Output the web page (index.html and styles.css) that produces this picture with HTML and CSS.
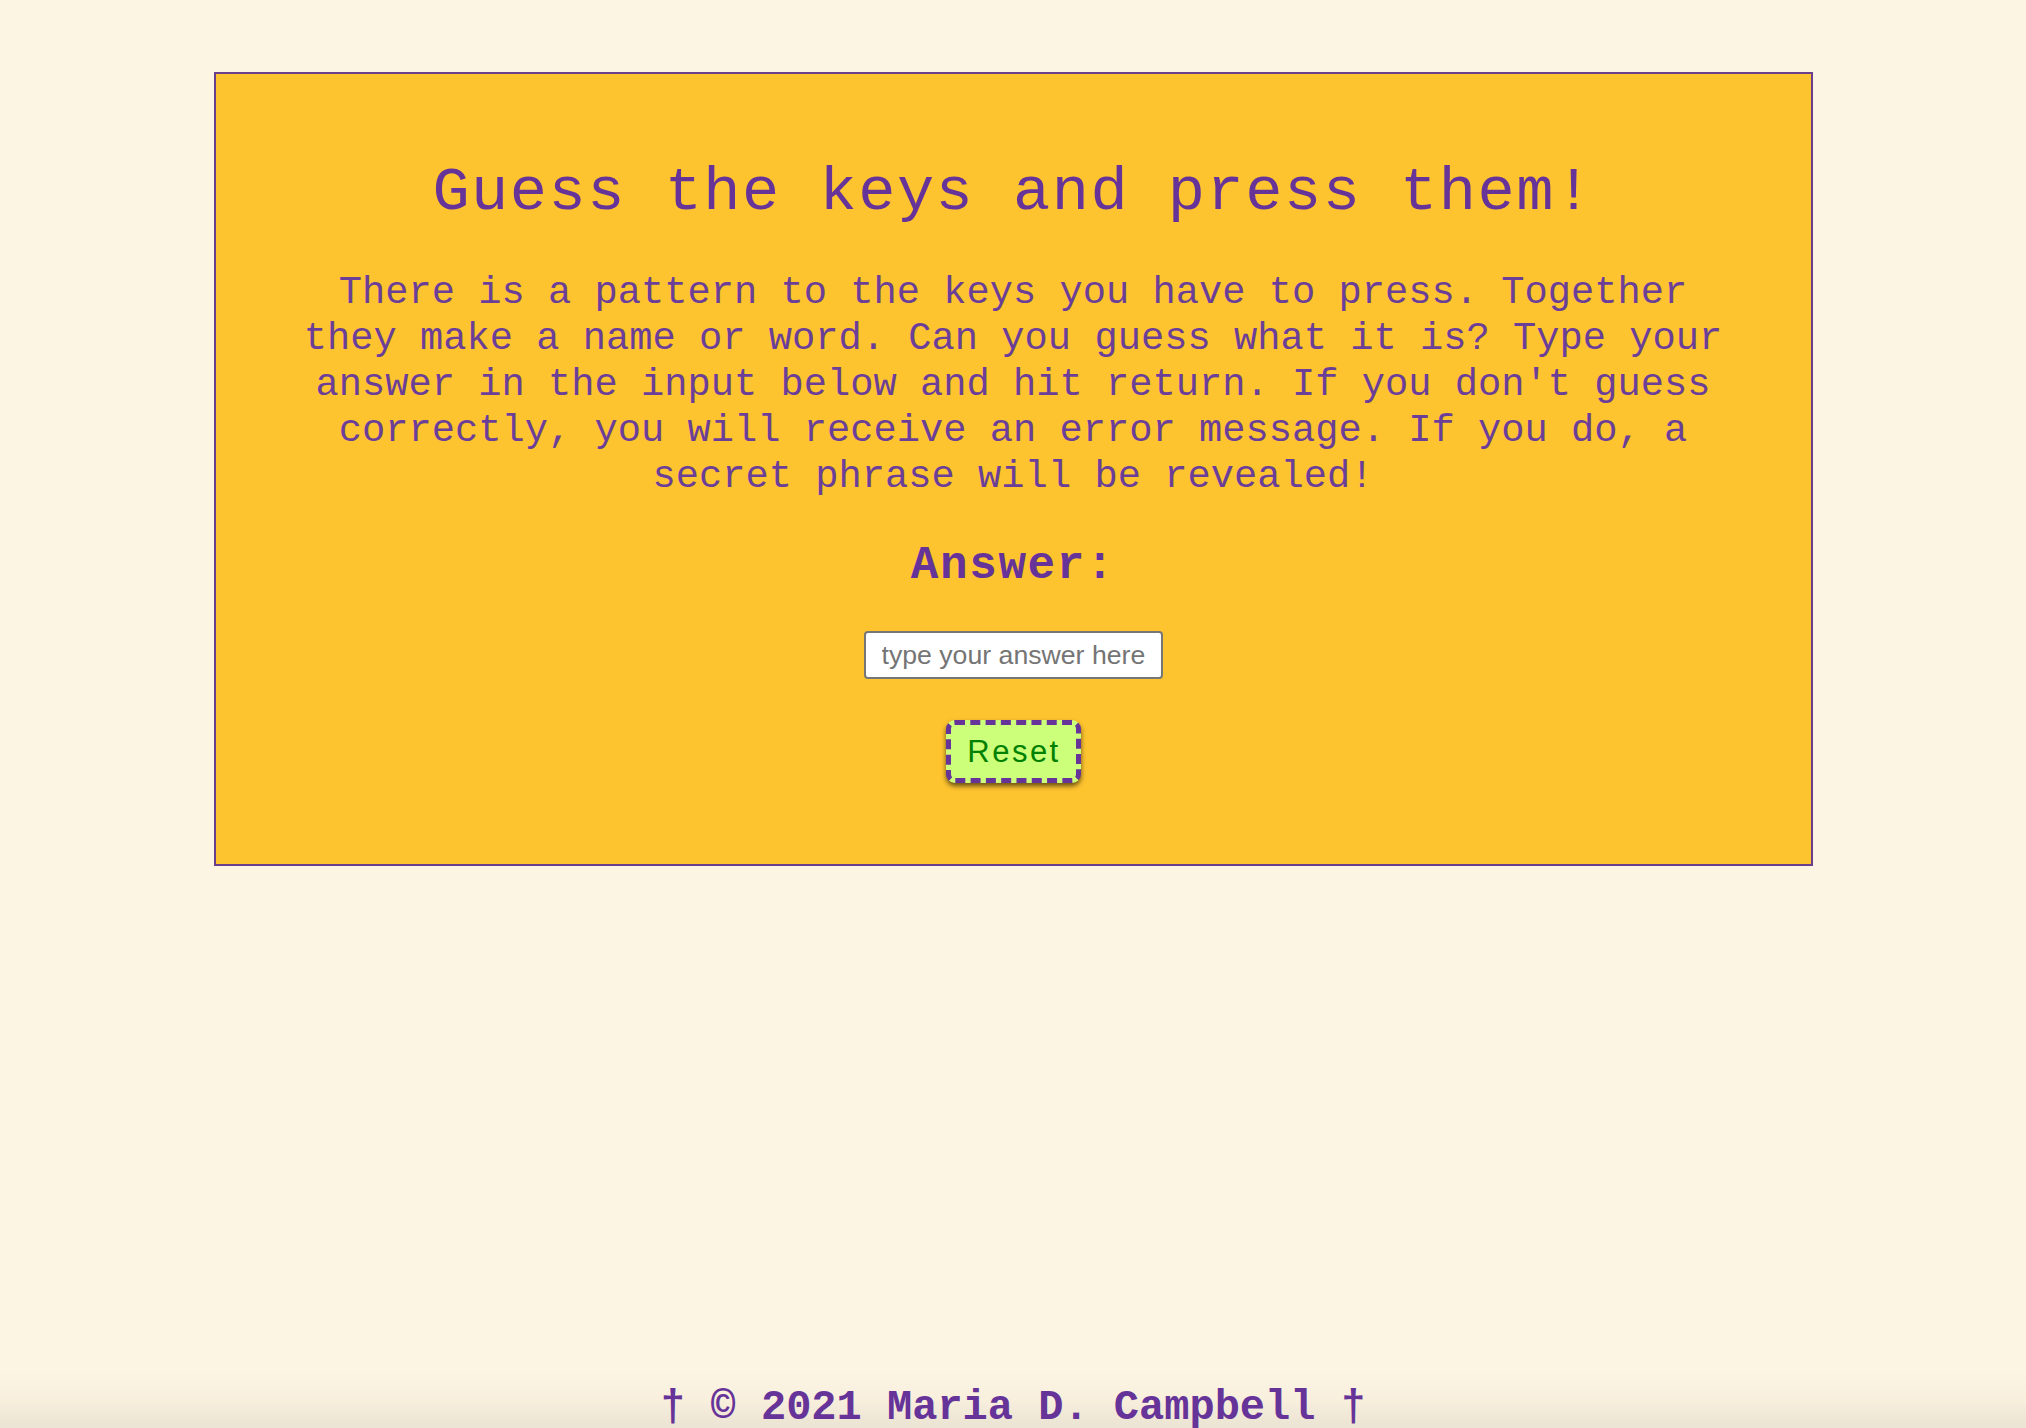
FILE: index.html
```html
<!DOCTYPE html>
<html lang="en">
<head>
<meta charset="utf-8">
<title>Guess the keys</title>
<link rel="stylesheet" href="styles.css">
</head>
<body>
<div class="page">
  <main class="card">
    <h1 class="title">Guess the keys and press them!</h1>
    <p class="intro">There is a pattern to the keys you have to press. Together they make a name or word. Can you guess what it is? Type your answer in the input below and hit return. If you don't guess correctly, you will receive an error message. If you do, a secret phrase will be revealed!</p>
    <label class="answer-label" for="answer">Answer:</label>
    <input class="answer-input" id="answer" type="text" placeholder="type your answer here">
    <button class="reset-btn" type="button">Reset</button>
  </main>
  <footer class="footer">† © 2021 Maria D. Campbell †</footer>
</div>
</body>
</html>
```
FILE: styles.css
```css
html, body {
  margin: 0;
  padding: 0;
}
body {
  background: #fdf5e4;
  color: #663399;
  font-family: "Courier New", "Liberation Mono", monospace;
}
.page {
  min-height: 100vh;
  display: flex;
  flex-direction: column;
  align-items: center;
}
.card {
  box-sizing: border-box;
  width: 1599px;
  margin-top: 72px;
  padding: 83px 80px 81px;
  background: #fec42f;
  border: 2px solid #6a3f8c;
  display: flex;
  flex-direction: column;
  align-items: center;
}
.title {
  margin: 0;
  font-size: 62px;
  line-height: 72px;
  font-weight: normal;
  letter-spacing: 1.5px;
  color: #663399;
  text-align: center;
}
.intro {
  margin: 41px 0 0;
  width: 1440px;
  font-size: 38.75px;
  line-height: 46px;
  text-align: center;
  color: #6b3f98;
}
.answer-label {
  margin-top: 39px;
  font-size: 46px;
  line-height: 54px;
  font-weight: bold;
  letter-spacing: 1.6px;
  color: #663399;
}
.answer-input {
  box-sizing: border-box;
  margin-top: 38px;
  width: 299px;
  height: 48px;
  padding: 0 16px;
  border: 2px solid #767676;
  border-radius: 4px;
  background: #ffffff;
  font-family: "Liberation Sans", Arial, sans-serif;
  font-size: 26.67px;
  color: #222;
  text-align: center;
}
.answer-input::placeholder {
  color: #757575;
}
.reset-btn {
  box-sizing: border-box;
  margin-top: 41px;
  width: 135px;
  height: 63px;
  padding: 0 0 0 2px;
  background: #ccff7a;
  border: 5px dashed #663399;
  border-radius: 9px;
  box-shadow: 0 3px 5px rgba(0, 0, 0, 0.6);
  font-family: "Liberation Sans", Arial, sans-serif;
  font-size: 31px;
  letter-spacing: 2.5px;
  color: #008000;
}
.footer {
  box-sizing: border-box;
  margin-top: auto;
  width: 100%;
  height: 58px;
  padding-top: 15px;
  background: linear-gradient(to bottom, #fdf5e4 0%, #f8efdd 50%, #ebe3d3 100%);
  font-size: 42px;
  line-height: 46px;
  font-weight: bold;
  letter-spacing: 0;
  text-align: center;
  color: #663399;
}
```
